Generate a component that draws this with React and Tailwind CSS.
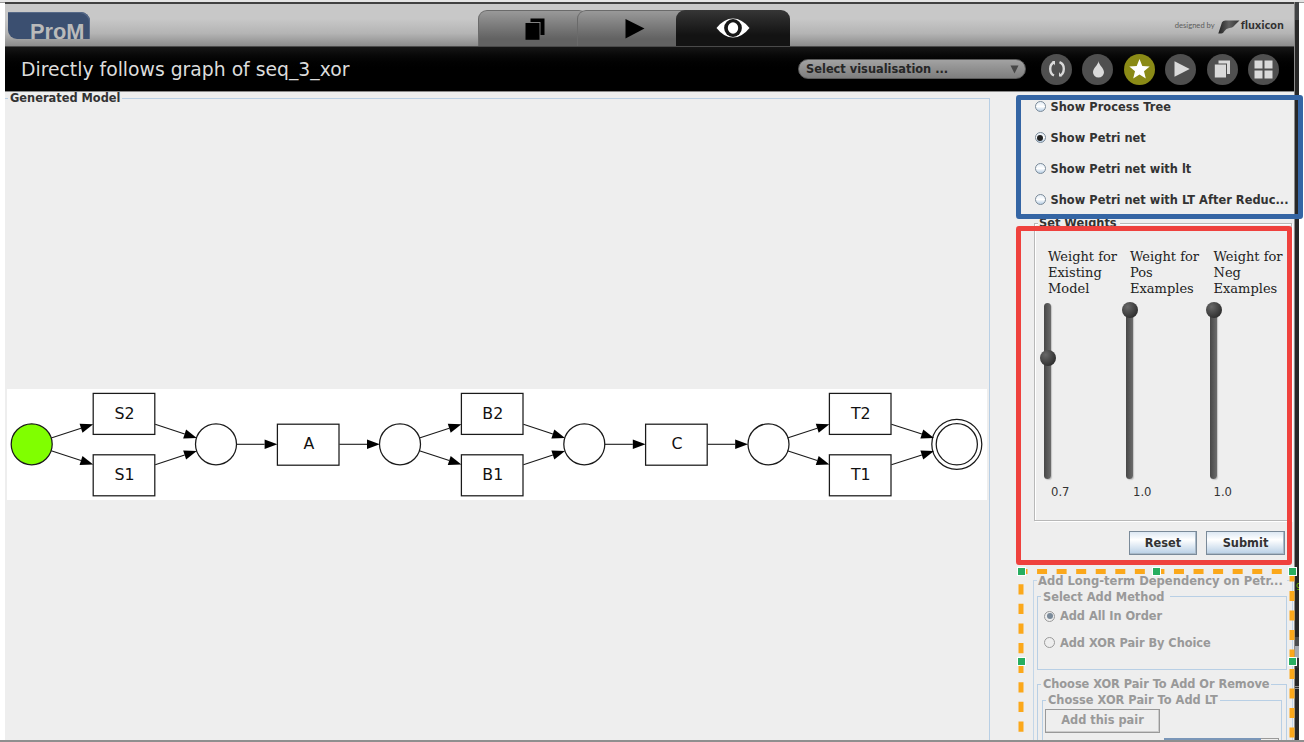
import React from "react";

const INK = "#1a1a1a";

function Arrow({ x1, y1, x2, y2 }) {
  const len = Math.hypot(x2 - x1, y2 - y1);
  const ux = (x2 - x1) / len;
  const uy = (y2 - y1) / len;
  const bx = x2 - ux * 12.8;
  const by = y2 - uy * 12.8;
  const h = 4.7;
  return (
    <g>
      <line x1={x1} y1={y1} x2={bx} y2={by} stroke={INK} strokeWidth="1.1" />
      <polygon
        points={`${x2},${y2} ${bx - uy * h},${by + ux * h} ${bx + uy * h},${by - ux * h}`}
        fill="#000"
      />
    </g>
  );
}

function Transition({ x, y, label }) {
  return (
    <g>
      <rect x={x} y={y} width="61.6" height="41" fill="#fff" stroke={INK} strokeWidth="1.25" />
      <text
        x={x + 31.4}
        y={y + 25.2}
        fontSize="15.8"
        textAnchor="middle"
        fill="#111"
        fontFamily="'DejaVu Sans', sans-serif"
      >
        {label}
      </text>
    </g>
  );
}

function PetriNet() {
  const cy = 55.3;
  const places = [24.7, 209, 393, 577.3, 761.5];
  const pairs = [
    { x: 86.2, top: "S2", bottom: "S1", end: 0 },
    { x: 454.4, top: "B2", bottom: "B1", end: 0 },
    { x: 822.4, top: "T2", bottom: "T1", end: 1 },
  ];
  const singles = [
    { x: 270.4, label: "A" },
    { x: 638.6, label: "C" },
  ];
  return (
    <svg className="block bg-white" width="980" height="111" viewBox="0 0 980 111">
      {places.map((x, i) => (
        <circle key={x} cx={x} cy={cy} r="20.5" fill={i === 0 ? "#80ff00" : "#fff"} stroke={INK} strokeWidth="1.25" />
      ))}
      <circle cx="949.8" cy={cy} r="25" fill="#fff" stroke={INK} strokeWidth="1.25" />
      <circle cx="949.8" cy={cy} r="20.6" fill="#fff" stroke={INK} strokeWidth="1.25" />
      {pairs.map((p) => (
        <g key={p.top}>
          <Transition x={p.x} y={4.4} label={p.top} />
          <Transition x={p.x} y={65.8} label={p.bottom} />
          <Arrow x1={p.x - 42} y1={49} x2={p.x} y2={35.3} />
          <Arrow x1={p.x - 42} y1={61.8} x2={p.x} y2={75.5} />
          <Arrow x1={p.x + 62} y1={35.2} x2={p.x + 103.6 + p.end} y2={49} />
          <Arrow x1={p.x + 62} y1={75.8} x2={p.x + 103.6 + p.end} y2={62} />
        </g>
      ))}
      {singles.map((s) => (
        <g key={s.label}>
          <Transition x={s.x} y={35.2} label={s.label} />
          <Arrow x1={s.x - 41} y1={cy} x2={s.x} y2={cy} />
          <Arrow x1={s.x + 62} y1={cy} x2={s.x + 102.4} y2={cy} />
        </g>
      ))}
    </svg>
  );
}

function Radio({ checked, disabled }) {
  return (
    <span
      className={
        "mb-[2px] flex h-[11px] w-[11px] shrink-0 items-center justify-center rounded-full border " +
        (disabled ? "border-[#9a9a9a] bg-[#eeeeee]" : "border-[#7a8a99] bg-linear-to-b from-[#e4edf6] via-white to-[#b8cfe5]")
      }
    >
      {checked && <span className={"h-[6px] w-[6px] rounded-full " + (disabled ? "bg-[#7a8a99]" : "bg-[#222222]")} />}
    </span>
  );
}

function Group({ title, titleClass, className, children }) {
  return (
    <section className={"relative shrink-0 border " + className}>
      <h2 className={"absolute bg-[#eeeeee] leading-[14px] whitespace-nowrap " + titleClass}>{title}</h2>
      {children}
    </section>
  );
}

function Slider({ knobClass }) {
  return (
    <div className="relative h-[176px] w-[7px] rounded-full bg-linear-to-r from-[#474747] to-[#6c6c6c] shadow-[1px_1px_1px_#c4c4c4]">
      <span
        className={
          "absolute -left-[4px] h-[16px] w-[16px] rounded-full bg-radial-[at_35%_30%] from-[#686868] to-[#1c1c1c] " + knobClass
        }
      />
    </div>
  );
}

function WeightColumn({ lines, knobClass, value, className, valueClass }) {
  return (
    <div className={"shrink-0 font-normal " + className}>
      <p className="pl-[4px] font-['DejaVu_Serif',serif] text-[13px] leading-[16px] whitespace-nowrap text-[#222222]">
        {lines.map((l) => (
          <span key={l} className="block">
            {l}
          </span>
        ))}
      </p>
      <div className="mt-[6px]">
        <Slider knobClass={knobClass} />
      </div>
      <p className={"mt-[6px] text-[11.6px] leading-[14px] text-[#333333] " + valueClass}>{value}</p>
    </div>
  );
}

function SwingButton({ children, className }) {
  return (
    <button
      className={
        "h-[24px] border border-[#7a8a99] bg-linear-to-b from-[#dde8f3] via-white via-35% to-[#b8cfe5] pt-[1px] text-[11.4px] leading-none font-bold text-[#333333] shadow-[inset_-1px_-1px_0_#a9b9c8] " +
        className
      }
    >
      {children}
    </button>
  );
}

function ToolButton({ active, children }) {
  return (
    <span className={"flex h-[31px] w-[31px] items-center justify-center rounded-full " + (active ? "bg-[#8a8a16]" : "bg-[#4f4f4f]")}>
      {children}
    </span>
  );
}

function Header() {
  return (
    <header className="flex h-[42px] shrink-0 bg-linear-to-b from-[#c8c8c8] from-35% via-[#b4b4b4] via-70% to-[#8c8c8c]">
      <div className="mt-[8px] ml-[3px] flex h-[27px] w-[82px] overflow-hidden rounded-tr-[9px] rounded-bl-[9px] bg-[#3b4f70] pl-[22px] shadow-[inset_-1px_1px_0_#566988]">
        <span className="mt-[8px] font-['Liberation_Sans',sans-serif] text-[21.8px] leading-[24px] font-bold text-[#bababa]">ProM</span>
      </div>
      <nav className="mt-[6px] ml-[388px] flex h-[36px]">
        <span className="flex w-[110px] justify-center rounded-t-[9px] border border-b-0 border-[#6a6a6a] bg-linear-to-b from-[#999999] to-[#626262] to-80% pt-[7px]">
          <svg className="ml-[3px]" width="20" height="22" viewBox="0 0 20 22">
            <path d="M5.5 0.5H19.5V17H15.5V4H5.5z" fill="#000" />
            <path d="M0.5 5H14.5V21.8H0.5z" fill="#000" />
          </svg>
        </span>
        <span className="-ml-[11px] flex w-[110px] rounded-tl-[9px] border border-b-0 border-[#6a6a6a] bg-linear-to-b from-[#999999] to-[#626262] to-80% pt-[8px] pl-[47px]">
          <svg width="20" height="20" viewBox="0 0 20 20">
            <path d="M0.5 0L19.5 9.5L0.5 19.5z" fill="#000" />
          </svg>
        </span>
        <span className="-ml-[11px] flex w-[113.5px] justify-center rounded-t-[9px] bg-linear-to-b from-[#363636] to-[#131313] to-70% pt-[8px]">
          <svg width="34" height="20" viewBox="0 0 34 20">
            <path d="M0.5 10Q8 .5 17 .5T33.5 10Q26 19.5 17 19.5T.5 10z" fill="#fff" />
            <circle cx="17" cy="10" r="8.9" fill="#161616" />
            <ellipse cx="17" cy="10" rx="5.2" ry="5.8" fill="#fff" />
          </svg>
        </span>
      </nav>
      <div className="ml-auto flex items-center pr-[10px] font-['Lato',sans-serif]">
        <span className="mt-[2px] text-[7.6px] text-[#5c5c5c]">designed by</span>
        <svg className="mt-[5px] ml-[3px]" width="23" height="16" viewBox="0 0 23 16">
          <defs>
            <linearGradient id="flux" x1="0" x2="1">
              <stop offset="0" stopColor="#222" />
              <stop offset=".5" stopColor="#606060" />
              <stop offset="1" stopColor="#333" />
            </linearGradient>
          </defs>
          <path d="M4 2.200Q5 .6 7.500 .6H21.500Q18 4 15.500 6.600Q14.500 8 11.500 8Q8 8.500 6.500 11Q5 13.500 3.500 13.600H.3z" fill="url(#flux)" />
        </svg>
        <span className="text-[11.4px] font-black tracking-[0.3px] text-[#303030]">fluxicon</span>
      </div>
    </header>
  );
}

function TitleBar() {
  return (
    <div className="flex h-[46px] shrink-0 items-center border-t border-b border-t-[#4a4a4a] border-b-[#8a8a8a] bg-linear-to-b from-[#161616] to-black to-60% pr-[15px] pl-[16px]">
      <h1 className="mt-[2px] text-[18.8px] leading-[24px] text-[#dcdcdc]">Directly follows graph of seq_3_xor</h1>
      <div className="ml-auto flex h-[20px] w-[228px] items-center justify-between rounded-full border border-[#5a5a5a] bg-linear-to-b from-[#a2a2a2] to-[#7e7e7e] pr-[6px] pl-[7px]">
        <span className="pt-[1px] text-[11.4px] font-bold text-[#262626]">Select visualisation ...</span>
        <svg width="9" height="9" viewBox="0 0 9 9">
          <path d="M.5 .5H8.500L4.500 8.500z" fill="#484848" />
        </svg>
      </div>
      <div className="ml-[15px] flex gap-[10.4px]">
        <ToolButton>
          <svg width="18" height="18" viewBox="0 0 18 18" fill="none" stroke="#dadada" strokeWidth="2.4">
            <path d="M6.500 2.200Q2 4 2.200 9T6 15.500" />
            <path d="M11.500 2.200Q16 4 15.800 9T12 15.500" />
            <path d="M4 1H7V5.500zM14 16.500H11V12z" fill="#dadada" stroke="none" />
          </svg>
        </ToolButton>
        <ToolButton>
          <svg className="mt-[1px] ml-[1px]" width="13" height="17" viewBox="0 0 13 17">
            <path d="M6.500 0C6.700 4 12 7 12 11.200A5.500 5.300 0 0 1 1 11.200C1 7 6.300 4 6.500 0z" fill="#dadada" />
          </svg>
        </ToolButton>
        <ToolButton active>
          <svg width="21" height="20" viewBox="0 0 21 20">
            <path d="M10.500 0L13.300 6.900L20.700 7.500L15 12.200L16.800 19.500L10.500 15.500L4.200 19.500L6 12.200L.3 7.500L7.700 6.900z" fill="#fff" />
          </svg>
        </ToolButton>
        <ToolButton>
          <svg className="ml-[2px]" width="16" height="16" viewBox="0 0 16 16">
            <path d="M.5 .3L15.700 8L.5 15.700z" fill="#dadada" />
          </svg>
        </ToolButton>
        <ToolButton>
          <svg width="17" height="18" viewBox="0 0 17 18">
            <path d="M4.500 .5H16V14H13V3.500H4.500z" fill="#dadada" />
            <path d="M.8 4.500H12V17.500H.8z" fill="#dadada" />
          </svg>
        </ToolButton>
        <ToolButton>
          <svg width="19" height="19" viewBox="0 0 19 19" fill="#dadada">
            <path d="M.5 .5h8v8h-8zM10.500 .5h8v8h-8zM.5 10.500h8v8h-8zM10.500 10.500h8v8h-8z" />
          </svg>
        </ToolButton>
      </div>
    </div>
  );
}

function ControlPanel() {
  const views = ["Show Process Tree", "Show Petri net", "Show Petri net with lt", "Show Petri net with LT After Reduc..."];
  return (
    <aside className="ml-[43px] flex h-full w-[261px] shrink-0 flex-col overflow-hidden text-[11.4px] font-bold text-[#333333]">
      <div className="flex shrink-0 flex-col pl-[1.5px]">
        {views.map((v, i) => (
          <label key={v} className="flex h-[31px] items-center gap-[5px] tracking-[0.03px] whitespace-nowrap">
            <Radio checked={i === 1} />
            {v}
          </label>
        ))}
      </div>

      <Group
        title="Set Weights"
        titleClass="-top-[8px] left-[3px] pr-[3px] pl-[1px]"
        className="mt-[7px] ml-[1px] h-[298px] w-[258px] border-[#b8b8b8] shadow-[inset_1px_1px_0_#fff,1px_1px_0_#fff]"
      >
        <div className="flex pt-[25px] pl-[9px]">
          <WeightColumn lines={["Weight for", "Existing", "Model"]} knobClass="top-[47px]" value="0.7" className="w-[82px]" valueClass="pl-[7px]" />
          <WeightColumn lines={["Weight for", "Pos", "Examples"]} knobClass="-top-[1px]" value="1.0" className="w-[83.5px]" valueClass="pl-[7px]" />
          <WeightColumn lines={["Weight for", "Neg", "Examples"]} knobClass="-top-[1px]" value="1.0" className="w-[78px]" valueClass="pl-[4px]" />
        </div>
      </Group>

      <div className="mt-[10px] flex shrink-0 justify-end gap-[9px] pr-[9px]">
        <SwingButton className="w-[68px]">Reset</SwingButton>
        <SwingButton className="w-[79px]">Submit</SwingButton>
      </div>

      <div className="mt-[25px] flex min-h-0 flex-1 text-[#999999]">
        <Group
          title="Add Long-term Dependency on Petr..."
          titleClass="-top-[7px] left-[3px] pr-[4px] pl-[1px] text-[11.55px]"
          className="h-[300px] w-[260px] border-[#c3d6e8] pt-[15px] pl-[3px]"
        >
          <Group title="Select Add Method" titleClass="-top-[7px] left-[3px] pr-[6px] pl-[2px]" className="h-[74px] w-[250px] border-[#b8cfe5] pt-[7px] pl-[6px]">
            <label className="flex h-[26px] items-center gap-[5px] tracking-[-0.05px]">
              <Radio checked disabled />
              Add All In Order
            </label>
            <label className="flex h-[27px] items-center gap-[5px] tracking-[-0.05px]">
              <Radio disabled />
              Add XOR Pair By Choice
            </label>
          </Group>
          <Group
            title="Choose XOR Pair To Add Or Remove"
            titleClass="-top-[8px] left-[3px] pr-[2px] pl-[2px] tracking-[-0.06px]"
            className="mt-[14px] h-[200px] w-[250px] border-[#b8cfe5] pt-[15px] pl-[4px]"
          >
            <Group title="Chosse XOR Pair To Add LT" titleClass="-top-[8px] left-[3px] pr-[2px] pl-[2px]" className="h-[160px] w-[240px] border-[#b8cfe5] pt-[8px] pl-[2px]">
              <button className="block h-[24px] w-[115px] border border-[#999999] leading-none shadow-[inset_-1px_-1px_0_#ccc]">Add this pair</button>
              <div className="mt-[5px] ml-[119px] flex h-[20px] w-[115px]">
                <span className="w-[97px] border-2 border-[#7a96b8] bg-[#dce6f0]" />
                <span className="flex-1 border border-l-0 border-[#999999]" />
              </div>
            </Group>
          </Group>
        </Group>
      </div>
    </aside>
  );
}

function Annotations() {
  const handles = [
    [1021.5, 571.5],
    [1156.5, 571.5],
    [1292.5, 571.5],
    [1021.5, 661.5],
    [1292.5, 661.5],
  ];
  return (
    <>
      <div className="absolute top-[95px] left-[1016px] h-[124px] w-[287px] rounded-[3px] border-5 border-[#3465a4]" />
      <div className="absolute top-[226px] left-[1016px] h-[339px] w-[276px] rounded-[3px] border-5 border-[#ef413d]" />
      <svg className="absolute top-0 left-0" width="1304" height="742" viewBox="0 0 1304 742">
        <g stroke="#fba81b" strokeWidth="5" fill="none">
          <path d="M1017.500 571.500H1290" strokeDasharray="10 9.560" />
          <path d="M1021 584.200V740" strokeDasharray="10.300 9.300" />
          <path d="M1292 571.500V740" strokeDasharray="10 9.500" />
        </g>
        {handles.map(([x, y]) => (
          <rect key={`${x}-${y}`} x={x - 4} y={y - 4} width="8" height="8" fill="#27ae60" stroke="#fff" strokeWidth="1" />
        ))}
      </svg>
    </>
  );
}

export default function App() {
  return (
    <div className="relative flex h-[742px] w-[1304px] flex-col overflow-hidden bg-white font-['DejaVu_Sans',sans-serif]">
      <div className="h-[2px] shrink-0 bg-[#e4e4e4]" />
      <div className="flex h-[738px] shrink-0">
        <div className="w-[5px] border-t border-[#9a9a9a]" />
        <div className="flex w-[1289px] flex-col border-t-2 border-[#404040]">
          <Header />
          <TitleBar />
          <div className="flex min-h-0 flex-1 overflow-hidden bg-[#eeeeee]">
            <Group
              title="Generated Model"
              titleClass="-top-[8px] left-[3px] px-[2px] text-[11.4px] font-bold text-[#333333]"
              className="mt-[6px] h-[660px] w-[985px] border-l-0 border-[#b8cfe5] pt-[290px] pl-[2px]"
            >
              <PetriNet />
            </Group>
            <ControlPanel />
          </div>
        </div>
        <div className="flex w-[5px] flex-col border-l border-[#8c8c8c] bg-[#272727]">
          <span className="h-[18px] bg-[#414345]" />
          <span className="mt-[561px] h-[10px] overflow-hidden pl-[1px] text-[9px] leading-[8px] text-[#7ab800]">g</span>
          <span className="mt-[46px] h-[9px] bg-[#4a4c4e]" />
          <span className="h-[12px] bg-[#a5a9b0]" />
          <span className="h-[10px] bg-[#333333]" />
          <span className="mt-[18px] h-[3px] border-y border-[#8a8a8a]" />
        </div>
        <div className="w-[5px] border-t border-[#9a9a9a]" />
      </div>
      <div className="h-[2px] shrink-0 bg-[#8f8f8f]" />
      <Annotations />
    </div>
  );
}
